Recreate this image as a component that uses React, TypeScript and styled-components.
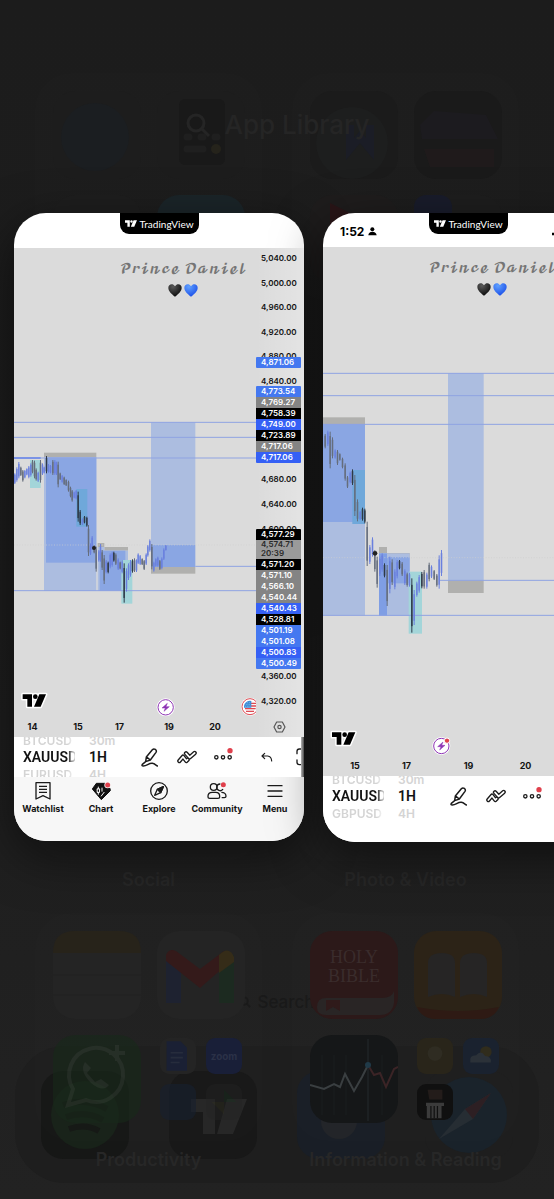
import React from 'react';
import styled, { createGlobalStyle, css } from 'styled-components';

const GlobalStyle = createGlobalStyle`
  * { box-sizing: border-box; }
  body { margin: 0; background: #1e1e1e; font-family: Inter, "Liberation Sans", sans-serif; }
  button { border: 0; margin: 0; padding: 0; background: none; color: inherit; font: inherit; }
  svg { display: block; }
`;

const Page = styled.div`
  position: relative;
  min-height: 100vh;
  padding-top: 213px;
  overflow: hidden;
  background: linear-gradient(#1c1c1c, #1d1d1d 50%, #222222);
`;

/* ---------- dimmed home screen ---------- */

const Backdrop = styled.div`
  position: absolute;
  inset: 0;
  overflow: hidden;
`;

const FolderGrid = styled.div`
  position: relative;
  display: grid;
  grid-template-columns: 1fr 1fr;
  column-gap: 30px;
  padding: 73px 35px 0;
`;

const FolderCell = styled.div`
  height: 280px;
  text-align: center;
`;

const FolderBox = styled.div`
  display: grid;
  grid-template-columns: 88px 88px;
  grid-auto-rows: 88px;
  gap: 16px;
  justify-content: center;
  align-content: center;
  height: 228px;
  border-radius: 36px;
  background: rgba(255, 255, 255, 0.008);
`;

const FolderLabel = styled.div`
  font-size: 18px;
  line-height: 24px;
  padding-top: 7px;
  font-weight: 600;
  color: #272727;
`;

const Quad = styled.div`
  display: grid;
  grid-template-columns: 36px 36px;
  grid-auto-rows: 36px;
  gap: 10px;
  justify-content: center;
  align-content: center;
`;

const Dock = styled.div`
  position: absolute;
  left: 15px;
  right: 15px;
  bottom: 16px;
  height: 137px;
  display: flex;
  justify-content: space-between;
  align-items: center;
  padding: 0 26px;
  border-radius: 50px;
  background: #1e1e1e;
`;

const LibraryTitle = styled.div`
  position: absolute;
  top: 109px;
  left: 0;
  right: 0;
  display: flex;
  justify-content: center;
  align-items: center;
  gap: 14px;
  font-size: 26px;
  line-height: 32px;
  font-weight: 500;
  color: #252525;
`;

const SearchHint = styled.div`
  position: absolute;
  bottom: 187px;
  left: 0;
  right: 0;
  display: flex;
  justify-content: center;
  align-items: center;
  gap: 6px;
  font-size: 17px;
  line-height: 20px;
  font-weight: 500;
  color: #191919;
`;

/* ---------- app cards ---------- */

const Switcher = styled.main`
  position: relative;
  display: flex;
  align-items: flex-start;
  gap: 19px;
  padding: 0 0 60px 14px;
`;

const Card = styled.article`
  flex: none;
  width: calc(50vw + 13px);
  min-width: 290px;
  overflow: hidden;
  border-radius: 32px;
  background: #ffffff;
  color: #131313;
  box-shadow: 0 14px 50px rgba(0, 0, 0, 0.55);
`;

const StatusBar = styled.header<{ $tall?: boolean }>`
  display: grid;
  grid-template-columns: 1fr auto 1fr;
  height: ${(p) => (p.$tall ? 35 : 34)}px;
`;

const Clock = styled.div`
  display: flex;
  align-items: center;
  gap: 4px;
  padding: 3px 0 0 17px;
  font-size: 12px;
  line-height: 16px;
  font-weight: 700;
  color: #000;
`;

const Signal = styled.div`
  display: flex;
  align-items: center;
  padding: 3px 0 0 43px;
`;

const Brand = styled.div`
  display: flex;
  align-items: center;
  justify-content: center;
  gap: 3px;
  width: 79px;
  height: 21px;
  border-radius: 0 0 9px 9px;
  background: #000;
  color: #fff;
  font-family: Lato, sans-serif;
  font-size: 10px;
  line-height: 12px;
  font-weight: 400;
`;

const ChartArea = styled.section`
  position: relative;
  display: flex;
  background: #dbdbdb;
`;

const PlotColumn = styled.div`
  flex: 1;
  min-width: 0;
`;

const PlotSvg = styled.svg<{ $h: number }>`
  width: 100%;
  height: ${(p) => p.$h}px;
`;

const TimeAxis = styled.div<{ $cols: string }>`
  display: grid;
  grid-template-columns: ${(p) => p.$cols};
  height: 20px;
  text-align: center;
  font-size: 9px;
  line-height: 20px;
  font-weight: 700;
`;

const Watermark = styled.div`
  position: absolute;
  top: 10px;
  left: 106px;
  display: flex;
  flex-direction: column;
  align-items: center;
  gap: 4px;
  font-family: "DejaVu Math TeX Gyre", "DejaVu Serif", serif;
  font-size: 12px;
  line-height: 22px;
  color: #757575;
  white-space: nowrap;
`;

const Hearts = styled.div`
  display: flex;
  gap: 2px;
`;

const PriceColumn = styled.div`
  position: relative;
  flex: none;
  width: 48px;
  font-size: 8px;
  line-height: 11px;
  font-weight: 600;
  background: linear-gradient(90deg, rgba(255, 255, 255, 0), rgba(255, 255, 255, 0.25));
`;

const Ticks = styled.div`
  display: flex;
  flex-direction: column;
  justify-content: space-between;
  height: 459px;
  padding: 5px 0 0 5px;
`;

const Tick = styled.div`
  height: 11px;
`;

const LevelStack = styled.div<{ $top: number }>`
  position: absolute;
  top: ${(p) => p.$top}px;
  left: 0;
  width: 45px;
  overflow: hidden;
  border-radius: 1px;
`;

type Tone = 'blue' | 'deep' | 'gray' | 'black' | 'now';
const tones: Record<Tone, string> = {
  blue: '#4478f0',
  deep: '#3560f5',
  gray: '#848484',
  black: '#000000',
  now: '#9a9a9a',
};

const Level = styled.div<{ $tone: Tone }>`
  padding-left: 5px;
  height: 11px;
  background: ${(p) => tones[p.$tone]};
  color: #fff;
  ${(p) =>
    p.$tone === 'now' &&
    css`
      height: 19px;
      line-height: 9px;
      color: #2a2a2a;
    `}
`;

const AxisButton = styled.button`
  position: absolute;
  right: 18px;
  bottom: 4px;
`;

const Toolbar = styled.div<{ $h: number }>`
  position: relative;
  display: flex;
  height: ${(p) => p.$h}px;
  padding-left: 9px;
  overflow: hidden;
  background: #fff;
`;

const Wheel = styled.div<{ $w: number; $fade?: boolean }>`
  display: flex;
  flex-direction: column;
  align-items: flex-start;
  flex: none;
  width: ${(p) => p.$w}px;
  height: 51px;
  margin: -5px 14px 0 0;
  overflow: hidden;
  white-space: nowrap;
  ${(p) =>
    p.$fade &&
    css`
      mask-image: linear-gradient(90deg, #000 86%, rgba(0, 0, 0, 0.4) 94%, rgba(0, 0, 0, 0.2));
    `}
`;

const WheelOption = styled.button<{ $on?: boolean }>`
  height: 17px;
  line-height: 17px;
  font-size: ${(p) => (p.$on ? 14 : 12)}px;
  font-weight: 600;
  color: ${(p) => (p.$on ? '#131313' : '#d4d4d4')};
  font-family: ${(p) => (p.$on ? 'Roboto, sans-serif' : 'inherit')};
`;

const Tools = styled.div`
  display: flex;
  align-items: center;
  height: 40px;
`;

const Tool = styled.button<{ $w?: number }>`
  display: flex;
  justify-content: center;
  flex: none;
  width: ${(p) => p.$w ?? 37}px;
`;

const EdgeShade = styled.div`
  position: absolute;
  top: 0;
  right: 0;
  width: 3px;
  height: 100%;
  background: linear-gradient(90deg, #b5b5b5, #4a4a4a);
`;

const Nav = styled.nav`
  display: grid;
  grid-template-columns: repeat(5, 1fr);
  height: 64px;
  padding-top: 4px;
  background: #f7f7f7;
`;

const NavLink = styled.a`
  display: flex;
  flex-direction: column;
  align-items: center;
  gap: 1px;
  color: #131313;
  text-decoration: none;
  font-size: 9px;
  line-height: 14px;
  font-weight: 700;
`;

/* ---------- drawings ---------- */

const tvPath = 'M0 0H28V37H14V14H0Z M50 0H70L54 37H34Z';

const TvMark = ({ x = 0, y = 0, fill = '#000', outline }: { x?: number; y?: number; fill?: string; outline?: boolean }) => (
  <g transform={`translate(${x} ${y})`}>
    {outline && (
      <g fill="#fff" stroke="#fff" strokeWidth="9" strokeLinejoin="round">
        <path d={tvPath} />
        <circle cx="38" cy="7" r="7" />
      </g>
    )}
    <path d={tvPath} fill={fill} />
    <circle cx="38" cy="7" r="7" fill={fill} />
  </g>
);

const Bolt = ({ cx, cy, dot }: { cx: number; cy: number; dot?: boolean }) => (
  <g transform={`translate(${cx} ${cy})`}>
    <circle r="27" fill="#fff" />
    <circle r="23" fill="#fff" stroke="#8e35b5" strokeWidth="3" />
    <path d="M5-12L-11 2H-1L-5 12L11-2H1Z" fill="#8e35b5" stroke="#8e35b5" strokeWidth="1.5" strokeLinejoin="round" />
    {dot && <circle cx="17" cy="-16" r="8" fill="#e0404c" stroke="#fff" strokeWidth="3" />}
  </g>
);

const Flag = ({ cx, cy }: { cx: number; cy: number }) => (
  <g transform={`translate(${cx} ${cy})`}>
    <circle r="27" fill="#fff" />
    <circle r="24" fill="#fff" stroke="#dd4a52" strokeWidth="3" />
    <circle r="18" fill="#f4f4f8" />
    <path d="M0-10H18M0-2H18M-15 6H17M-12 14H12" stroke="#dd4a52" strokeWidth="4" />
    <path d="M-18 3A18 18 0 0 1 4-17V3Z" fill="#3f8fd8" />
    <path d="M-12-6H2M-8-12H2M-14-1H2" stroke="#cfe4f6" strokeWidth="1.5" strokeDasharray="2 3" />
  </g>
);

const Heart = ({ id, from, to }: { id: string; from: string; to: string }) => (
  <svg width="14" height="13" viewBox="0 0 42 39" aria-hidden="true">
    <defs>
      <radialGradient id={id} cx="35%" cy="20%" r="80%">
        <stop offset="0" stopColor={from} />
        <stop offset="1" stopColor={to} />
      </radialGradient>
    </defs>
    <path d="M21 38C10 29 1 21 1 11C1 0 15-3 21 7C27-3 41 0 41 11C41 21 32 29 21 38Z" fill={`url(#${id})`} />
  </svg>
);

type Candle = [number, number, number, 'b' | 'd' | 'k'];
const ink = { b: '#6a80de', d: '#656d7c', k: '#2e3a48' };

const Candles = ({ data }: { data: Candle[] }) => (
  <g>
    {data.map(([x, top, bottom, tone]) => {
      const inset = (bottom - top) * 0.12;
      return (
        <g key={x} fill={ink[tone]}>
          <rect x={x - 1} y={top} width="3" height={bottom - top} />
          <rect x={x - 2} y={top + inset} width="5" height={bottom - top - inset * 2} opacity="0.85" />
        </g>
      );
    })}
  </g>
);

type Box = [number, number, number, number, string];
const Boxes = ({ data }: { data: Box[] }) => (
  <g>
    {data.map(([x1, y1, x2, y2, fill], i) => (
      <rect key={i} x={x1} y={y1} width={x2 - x1} height={y2 - y1} fill={fill} />
    ))}
  </g>
);

const STRONG = '#8aa6e3';
const SOFT = '#acbde0';
const GRAY = '#b0b0ae';
const CYAN = '#a3d5d9';
const TEAL = '#6fa8da';

/* Plot units: three to a pixel. */
const boxesA: Box[] = [
  [132, 128, 289, 142, GRAY],
  [132, 142, 289, 543, SOFT],
  [138, 142, 289, 458, STRONG],
  [90, 150, 122, 234, CYAN],
  [229, 237, 262, 350, TEAL],
  [453, 37, 586, 405, SOFT],
  [453, 405, 586, 471, STRONG],
  [453, 471, 586, 491, GRAY],
  [293, 399, 313, 411, GRAY],
  [313, 411, 384, 422, GRAY],
  [293, 411, 313, 543, SOFT],
  [299, 422, 384, 543, SOFT],
  [299, 422, 376, 543, STRONG],
  [364, 450, 397, 581, CYAN],
];

const candlesA: Candle[] = [
  [44, 190, 222, 'b'], [50, 172, 215, 'b'], [56, 156, 205, 'b'], [62, 170, 198, 'd'], [68, 180, 215, 'd'],
  [74, 180, 205, 'b'], [80, 175, 196, 'b'], [86, 168, 205, 'b'], [92, 160, 200, 'b'], [97, 150, 190, 'd'],
  [103, 152, 205, 'd'], [108, 175, 212, 'd'], [114, 185, 216, 'b'], [121, 150, 218, 'd'], [127, 160, 195, 'b'],
  [132, 170, 190, 'b'], [139, 138, 190, 'k'], [145, 162, 188, 'b'], [151, 165, 190, 'b'], [158, 150, 195, 'd'],
  [164, 150, 195, 'b'], [169, 155, 195, 'b'], [174, 155, 232, 'd'], [180, 188, 210, 'd'], [186, 195, 218, 'b'],
  [192, 200, 225, 'd'], [198, 208, 228, 'd'], [205, 212, 245, 'd'], [211, 230, 262, 'd'], [216, 240, 275, 'd'],
  [222, 245, 265, 'b'], [228, 240, 268, 'b'], [234, 245, 335, 'k'], [240, 300, 345, 'k'], [247, 325, 345, 'b'],
  [253, 318, 340, 'k'], [260, 320, 350, 'k'], [265, 345, 438, 'd'], [271, 400, 435, 'b'], [276, 378, 420, 'b'],
  [282, 405, 430, 'd'], [288, 410, 485, 'd'], [296, 420, 455, 'b'], [301, 402, 455, 'b'], [306, 420, 480, 'd'],
  [312, 435, 522, 'd'], [318, 450, 490, 'b'], [324, 455, 490, 'k'], [330, 430, 475, 'b'], [336, 425, 470, 'b'],
  [341, 425, 455, 'k'], [347, 430, 465, 'd'], [354, 445, 480, 'b'], [360, 455, 478, 'd'], [366, 450, 490, 'b'],
  [372, 460, 578, 'k'], [379, 475, 545, 'b'], [385, 460, 510, 'b'], [391, 450, 500, 'b'], [397, 448, 488, 'k'],
  [403, 445, 486, 'd'], [409, 448, 486, 'b'], [414, 430, 462, 'b'], [420, 435, 465, 'b'], [426, 445, 465, 'd'],
  [432, 450, 480, 'd'], [438, 430, 465, 'b'], [443, 405, 440, 'b'], [449, 388, 425, 'b'], [455, 402, 478, 'd'],
  [461, 455, 485, 'b'], [467, 445, 470, 'b'], [473, 440, 470, 'b'], [479, 450, 480, 'd'], [485, 442, 478, 'b'],
  [491, 415, 450, 'b'], [497, 405, 422, 'b'],
];

const boxesB: Box[] = [
  [39, 22, 165, 42, GRAY],
  [39, 42, 165, 336, STRONG],
  [39, 336, 165, 616, SOFT],
  [127, 180, 165, 342, TEAL],
  [414, -110, 521, 511, SOFT],
  [414, 511, 521, 549, GRAY],
  [207, 411, 231, 430, GRAY],
  [231, 429, 299, 441, GRAY],
  [207, 430, 299, 618, SOFT],
  [207, 430, 231, 618, '#7f9ee4'],
  [231, 441, 299, 520, STRONG],
  [296, 485, 336, 671, CYAN],
];

const candlesB: Candle[] = [
  [45, 72, 115, 'd'], [53, 62, 108, 'b'], [60, 65, 175, 'd'], [67, 82, 145, 'd'], [75, 118, 146, 'b'],
  [82, 120, 165, 'd'], [89, 130, 152, 'd'], [97, 143, 175, 'd'], [105, 160, 212, 'd'], [112, 198, 234, 'd'],
  [120, 185, 220, 'b'], [127, 178, 225, 'k'], [134, 195, 318, 'd'], [142, 268, 334, 'd'], [150, 303, 330, 'b'],
  [157, 293, 332, 'k'], [164, 296, 340, 'k'], [171, 335, 468, 'd'], [179, 405, 462, 'b'], [187, 382, 440, 'b'],
  [194, 420, 485, 'd'], [201, 440, 533, 'd'], [209, 440, 498, 'b'], [216, 430, 485, 'b'], [223, 460, 502, 'k'],
  [231, 465, 588, 'd'], [239, 440, 550, 'b'], [246, 448, 525, 'd'], [254, 478, 538, 'b'], [261, 450, 505, 'b'],
  [268, 450, 478, 'k'], [276, 456, 498, 'd'], [284, 478, 525, 'b'], [291, 488, 530, 'd'], [298, 488, 530, 'b'],
  [305, 505, 668, 'k'], [312, 540, 645, 'b'], [320, 515, 560, 'b'], [327, 495, 548, 'b'], [335, 486, 535, 'k'],
  [342, 480, 536, 'd'], [350, 488, 536, 'b'], [357, 458, 514, 'd'], [364, 466, 504, 'b'], [372, 480, 510, 'd'],
  [380, 492, 530, 'd'], [387, 436, 536, 'b'], [394, 420, 498, 'b'],
];

const PenIcon = () => (
  <svg width="17" height="19" viewBox="0 0 51 57" fill="none" stroke="#1b1b1b" strokeWidth="4.5" strokeLinejoin="round" strokeLinecap="round">
    <path d="M16 27L34 5Q38 1 43 4Q48 8 45 13L28 36L14 41Z M17 27L28 36 M14 41L4 49Q1 54 7 54C18 54 23 45 34 46C41 47 44 51 49 54" />
  </svg>
);

const PatternIcon = () => (
  <svg width="20" height="14" viewBox="0 0 60 42" strokeLinejoin="round" strokeLinecap="round" fill="none">
    <path d="M7 33L18 20L28 33L32 29" stroke="#1b1b1b" strokeWidth="13" />
    <path d="M7 33L18 20L28 33L32 29" stroke="#fff" strokeWidth="5" />
    <path d="M27 10L38 22L53 9" stroke="#1b1b1b" strokeWidth="13" />
    <path d="M27 10L38 22L53 9" stroke="#fff" strokeWidth="5" />
  </svg>
);

const MoreIcon = () => (
  <svg width="19" height="20" viewBox="0 0 57 60" fill="none" stroke="#1b1b1b" strokeWidth="4">
    <circle cx="7" cy="31" r="5" />
    <circle cx="27" cy="31" r="5" />
    <circle cx="47" cy="31" r="5" />
    <circle cx="48" cy="11" r="8" fill="#e0404c" stroke="none" />
  </svg>
);

const UndoIcon = () => (
  <svg width="12" height="11" viewBox="0 0 36 33" fill="none" stroke="#1b1b1b" strokeWidth="3.5" strokeLinejoin="round" strokeLinecap="round">
    <path d="M11 4L3 12L11 20M4 12H20Q31 13 32 27" />
  </svg>
);

const FrameIcon = () => (
  <svg width="17" height="18" viewBox="0 0 51 54" fill="none" stroke="#1b1b1b" strokeWidth="4" strokeLinecap="round">
    <path d="M14 3H10Q3 3 3 10V17M3 36V43Q3 50 10 50H14M36 3H41Q48 3 48 10V17M48 36V43Q48 50 41 50H36" />
  </svg>
);

const HexIcon = () => (
  <svg width="13" height="12" viewBox="0 0 39 36" fill="none" stroke="#555" strokeWidth="3.5" strokeLinejoin="round">
    <path d="M11 3H28L36 18L28 33H11L3 18Z" />
    <circle cx="19.500" cy="18" r="5" />
  </svg>
);

const navBase = { width: 20, height: 20, viewBox: '0 0 60 60', fill: 'none', stroke: '#1b1b1b', strokeWidth: 4, strokeLinejoin: 'round' as const };

const WatchIcon = () => (
  <svg {...navBase}>
    <path d="M9 5H51V54L30 44L9 54Z M18 16H42M18 25H42M18 34H42" />
  </svg>
);
const ChartIcon = () => (
  <svg {...navBase} stroke="none">
    <path d="M4 24L16 7H42Q46 20 57 22L58 29L31 56Z" fill="#111" stroke="#111" strokeWidth="3" />
    <path d="M22 17V41M33 20V32" stroke="#f7f7f7" strokeWidth="3" />
    <rect x="17" y="22" width="10" height="14" rx="3" fill="#f7f7f7" />
    <rect x="20" y="25" width="4" height="8" rx="2" fill="#111" />
    <path d="M30 46L40 33" stroke="#f7f7f7" strokeWidth="3" />
    <circle cx="50" cy="12" r="10" fill="#f7f7f7" />
    <circle cx="50" cy="12" r="7.500" fill="#e0404c" />
  </svg>
);
const ExploreIcon = () => (
  <svg {...navBase}>
    <circle cx="30" cy="30" r="25" />
    <path d="M43 17L35 35L17 43L25 25Z" />
    <path d="M43 17L35 35L25 25Z" fill="#1b1b1b" />
  </svg>
);
const CommunityIcon = () => (
  <svg {...navBase}>
    <circle cx="20" cy="18" r="10" />
    <path d="M3 48Q2 34 16 34H26Q39 34 38 48Q38 52 33 52H8Q3 52 3 48Z" />
    <path d="M40 9A10 10 0 1 0 48 24M43 34Q57 34 57 46Q57 50 52 50H44" />
    <circle cx="49" cy="11" r="7.500" fill="#e0404c" stroke="none" />
  </svg>
);
const MenuIcon = () => (
  <svg {...navBase} strokeLinecap="round">
    <path d="M9 14H51M9 30H51M9 46H51" />
  </svg>
);

const Person = () => (
  <svg width="9" height="9" viewBox="0 0 27 27" aria-hidden="true">
    <circle cx="13" cy="7" r="6" />
    <path d="M1 25Q2 14 13 14T26 25Z" />
  </svg>
);

/* ---------- home screen tiles ---------- */

const Tile = ({ fill = '#272727', size = 88, fade = 1, children }: { fill?: string; size?: number; fade?: number; children?: React.ReactNode }) => (
  <svg width={size} height={size} viewBox="0 0 88 88" opacity={fade} aria-hidden="true">
    <rect width="88" height="88" rx="22" fill={fill} />
    {children}
  </svg>
);

const MailTile = () => (
  <Tile fill="#242424">
    <path d="M9 72V24L24 36V72Z" fill="#1e2230" />
    <path d="M62 72V36L77 24V72Z" fill="#1c2a20" />
    <path d="M9 24Q12 17 19 20L43 38L67 20V36L43 57L9 30Z" fill="#341a1a" />
    <path d="M62 24Q72 14 77 26V31L62 42Z" fill="#352c18" />
  </Tile>
);

const BibleTile = () => (
  <Tile fill="#2c1919">
    <path d="M7 76Q7 67 16 67H72Q82 67 84 60V72Q82 84 70 84H16Q7 84 7 76Z" fill="#292525" />
    <path d="M16 69H30V80L23 76L16 80Z" fill="#2f1a1a" />
    <g fill="#3a2c2c" fontFamily="Liberation Serif, serif" fontSize="18" textAnchor="middle">
      <text x="44" y="32">HOLY</text>
      <text x="44" y="51">BIBLE</text>
    </g>
  </Tile>
);

const BooksTile = () => (
  <Tile fill="#2c2317">
    <path d="M14 66V32Q14 22 28 22Q41 22 41 32V66Q28 60 14 66ZM46 66V32Q46 22 60 22Q73 22 73 32V66Q60 60 46 66Z" fill="#262525" />
    <path d="M3 76Q44 84 85 76Q80 88 66 88H22Q8 88 3 76Z" fill="#2e1a14" />
  </Tile>
);

const WhatsAppTile = () => (
  <Tile fill="#18291a" fade={0.6}>
    <path d="M15 70L20 54A27 27 0 1 1 33 65Z" fill="none" stroke="#2c3a2d" strokeWidth="4" />
    <path d="M32 27Q26 36 38 48Q50 58 56 50L48 44L42 47L34 38L38 33Z" fill="#2c3a2d" />
    <path d="M64 10V26M56 18H72" stroke="#2c3a2d" strokeWidth="4" />
  </Tile>
);

const StocksTile = () => (
  <Tile fill="#151718">
    <path d="M12 20V80M24 20V80M36 20V80M72 20V80" stroke="#1b1e1f" />
    <path d="M58 4V86" stroke="#242a2c" />
    <path d="M0 50L14 54L24 49L30 52L35 39L44 56L52 42L58 30" fill="none" stroke="#3a3f41" strokeWidth="2" />
    <path d="M58 30L64 40L70 38L76 52L84 34L88 32" fill="none" stroke="#3b2426" strokeWidth="2" />
    <circle cx="58" cy="30" r="3" fill="#203a48" />
  </Tile>
);

const OfficeApps = () => (
  <Quad>
    <Tile size={36} fill="#242424"><path d="M16 8H50L66 24V80H16Z" fill="#1a2034" /><path d="M26 36H56M26 48H56M26 60H48" stroke="#262c3c" strokeWidth="4" /></Tile>
    <Tile size={36} fill="#191f38"><text x="44" y="54" fill="#2b3147" fontSize="24" fontWeight="700" textAnchor="middle">zoom</text></Tile>
    <Tile size={36} fill="#17202f" fade={0.6} />
    <Tile size={36} fill="#242424" fade={0.4}><path d="M44 14V44H74Z" fill="#18301f" /><path d="M44 74V44H14Z" fill="#30301f" /></Tile>
  </Quad>
);

const ReaderApps = () => (
  <Quad>
    <Tile size={36} fill="#29251a"><circle cx="44" cy="38" r="18" fill="#2f2c22" /></Tile>
    <Tile size={36} fill="#1a222f"><circle cx="56" cy="34" r="14" fill="#302c1c" /><path d="M18 60Q14 42 32 42Q44 28 54 44Q70 44 68 60Z" fill="#2b3138" /></Tile>
    <Tile size={36} fill="#101010"><path d="M22 46H66V54H60V84H24V54H22Z" fill="#3b3b3b" /><path d="M34 54V84M42 54V84M50 54V84" stroke="#101010" strokeWidth="3" /><path d="M26 14H62V38H30Z" fill="#231c1a" /></Tile>
  </Quad>
);

const HomeScreen = () => (
  <Backdrop aria-hidden="true">
    <SearchHint>
      <svg width="12" height="12" viewBox="0 0 26 26" fill="none" stroke="#191919" strokeWidth="4"><circle cx="11" cy="11" r="8" /><path d="M17 17L24 24" /></svg>
      Search
    </SearchHint>
    <Dock>
      <Tile fill="#161716"><circle cx="44" cy="44" r="34" fill="#182219" /><path d="M22 34Q44 26 66 38M25 46Q44 39 62 49M28 58Q44 52 58 60" fill="none" stroke="#151815" strokeWidth="6" /></Tile>
      <Tile fill="#181818"><g transform="translate(22 28)"><path d="M0 0H24V35H12V13H0Z M36 0H56L42 35H26Z" fill="#262626" /></g></Tile>
      <Tile fill="#191e26"><circle cx="42" cy="50" r="18" fill="#222428" /></Tile>
      <Tile fill="#1e1e1e"><circle cx="44" cy="44" r="38" fill="#19222a" /><path d="M14 68L40 38L66 22L48 48Z" fill="#252c32" /><path d="M40 38L66 22L48 48Z" fill="#2c1e22" /></Tile>
    </Dock>
    <FolderGrid>
      <FolderCell>
        <FolderBox>
          <Tile fill="#1d1d1d"><circle cx="42" cy="46" r="34" fill="#1b1e21" /></Tile>
          <Tile fill="#1d1d1d">
            <rect x="22" y="8" width="46" height="66" rx="6" fill="#191919" />
            <path d="M30 46H32M44 46H46M58 46H60M30 58H46" stroke="#1f1f1f" strokeWidth="7" strokeLinecap="round" />
            <circle cx="59" cy="58" r="5" fill="#25231b" />
          </Tile>
          <Tile fill="#1e1e1e" />
          <Tile fill="#1b2529" />
        </FolderBox>
      </FolderCell>
      <FolderCell>
        <FolderBox>
          <Tile fill="#1b1b1b"><circle cx="42" cy="52" r="36" fill="#1d1e1e" /><path d="M40 34V58L50 46L60 58V34" fill="none" stroke="#1b1d26" strokeWidth="8" /></Tile>
          <Tile fill="#1a1a1a"><path d="M6 34L20 20L72 24L84 48H8Z" fill="#1c1b1f" /><path d="M10 58H80V76H16Z" fill="#1f1a1b" /></Tile>
          <Tile fill="#1f1d1d"><path d="M20 8L44 20L20 34Z" fill="#2a1618" /></Tile>
          <Tile fill="#1e1e1e"><rect width="38" height="40" rx="12" fill="#191c2b" /></Tile>
        </FolderBox>
      </FolderCell>
      <FolderCell />
      <FolderCell />
      <FolderCell><FolderBox /><FolderLabel>Social</FolderLabel></FolderCell>
      <FolderCell><FolderBox /><FolderLabel>Photo &amp; Video</FolderLabel></FolderCell>
      <FolderCell>
        <FolderBox>
          <Tile fill="#242424"><path d="M0 22Q0 0 22 0H66Q88 0 88 22Z" fill="#27231a" /><path d="M0 44H88M0 64H88" stroke="#212121" /></Tile>
          <MailTile />
          <WhatsAppTile />
          <OfficeApps />
        </FolderBox>
        <FolderLabel>Productivity</FolderLabel>
      </FolderCell>
      <FolderCell>
        <FolderBox>
          <BibleTile />
          <BooksTile />
          <StocksTile />
          <ReaderApps />
        </FolderBox>
        <FolderLabel>Information &amp; Reading</FolderLabel>
      </FolderCell>
    </FolderGrid>
    <LibraryTitle>
      <svg width="26" height="26" viewBox="0 0 26 26" fill="none" stroke="#252525" strokeWidth="3"><circle cx="11" cy="11" r="8" /><path d="M17 17L24 24" /></svg>
      App Library
    </LibraryTitle>
  </Backdrop>
);

/* ---------- card parts ---------- */

const BrandTab = () => (
  <Brand>
    <svg width="12" height="7" viewBox="0 0 70 37" aria-hidden="true"><TvMark fill="#fff" /></svg>
    TradingView
  </Brand>
);

const OwnerMark = ({ id }: { id: string }) => (
  <Watermark>
    <span>𝓟𝓻𝓲𝓷𝓬𝓮 𝓓𝓪𝓷𝓲𝓮𝓵</span>
    <Hearts>
      <Heart id={`${id}-dark`} from="#5a5a5a" to="#0c0c0c" />
      <Heart id={`${id}-blue`} from="#5fa0ff" to="#1c50e8" />
    </Hearts>
  </Watermark>
);

const SymbolBar = ({ h, symbols, full }: { h: number; symbols: string[]; full?: boolean }) => (
  <Toolbar $h={h}>
    <Wheel $w={52} $fade>
      {symbols.map((s, i) => (
        <WheelOption key={s} $on={i === 1}>{s}</WheelOption>
      ))}
    </Wheel>
    <Wheel $w={28}>
      {['30m', '1H', '4H'].map((s, i) => (
        <WheelOption key={s} $on={i === 1}>{s}</WheelOption>
      ))}
    </Wheel>
    <Tools>
      <Tool aria-label="Draw"><PenIcon /></Tool>
      <Tool aria-label="Indicators"><PatternIcon /></Tool>
      <Tool aria-label="More"><MoreIcon /></Tool>
      {full && <Tool $w={50} aria-label="Undo"><UndoIcon /></Tool>}
      {full && <Tool $w={24} aria-label="Full screen"><FrameIcon /></Tool>}
    </Tools>
    {full && <EdgeShade />}
  </Toolbar>
);

const formatPrice = (value: number) => `${Math.floor(value / 1000)},${String(value % 1000).padStart(3, '0')}.00`;

/* Round prices that the level tags cover completely carry no label. */
const isCovered = (value: number) => (value > 4680 && value < 4840) || (value > 4360 && value < 4600);

const ticks = Array.from({ length: 19 }, (_, i) => 5040 - i * 40);

const levels: { top: number; rows: [string, Tone][] }[] = [
  { top: 109, rows: [['4,871.06', 'blue']] },
  {
    top: 138,
    rows: [
      ['4,773.54', 'blue'], ['4,769.27', 'gray'], ['4,758.39', 'black'], ['4,749.00', 'deep'],
      ['4,723.89', 'black'], ['4,717.06', 'gray'], ['4,717.06', 'deep'],
    ],
  },
  {
    top: 281,
    rows: [
      ['4,577.29', 'black'], ['4,574.71\n20:39', 'now'], ['4,571.20', 'black'], ['4,571.10', 'gray'],
      ['4,566.10', 'gray'], ['4,540.44', 'gray'], ['4,540.43', 'deep'], ['4,528.81', 'black'],
      ['4,501.19', 'blue'], ['4,501.08', 'blue'], ['4,500.83', 'deep'], ['4,500.49', 'blue'],
    ],
  },
];

const navItems = [
  { label: 'Watchlist', icon: <WatchIcon /> },
  { label: 'Chart', icon: <ChartIcon /> },
  { label: 'Explore', icon: <ExploreIcon /> },
  { label: 'Community', icon: <CommunityIcon /> },
  { label: 'Menu', icon: <MenuIcon /> },
];

const lineStyle = { stroke: '#8fa3e2', strokeWidth: 3 };

export default function App() {
  return (
    <>
      <GlobalStyle />
      <Page>
        <HomeScreen />
        <Switcher>
          <Card>
            <StatusBar $tall><span /><BrandTab /><span /></StatusBar>
            <ChartArea>
              <PlotColumn>
                <PlotSvg $h={469} viewBox="42 -486 726 1407" preserveAspectRatio="xMidYMid slice">
                  <Boxes data={boxesA} />
                  <path d="M42 37H768M42 82H768M42 144H768M586 469H768M42 542H768" {...lineStyle} />
                  <path d="M42 144H122" stroke="#7b93e6" strokeWidth="6" />
                  <path d="M42 405H768" stroke="#cfcfcf" strokeWidth="2" strokeDasharray="3 5" />
                  <Candles data={candlesA} />
                  <circle cx="282" cy="414" r="6" fill="#222" />
                  <TvMark x={68} y={853} outline />
                  <Bolt cx={497} cy={892} />
                  <Flag cx={750} cy={890} />
                </PlotSvg>
                <TimeAxis $cols="37fr 54fr 29fr 70fr 22fr 30fr">
                  <span>14</span><span>15</span><span>17</span><span>19</span><span>20</span>
                </TimeAxis>
              </PlotColumn>
              <PriceColumn>
                <Ticks>{ticks.map((t) => <Tick key={t}>{isCovered(t) ? null : formatPrice(t)}</Tick>)}</Ticks>
                {levels.map((group) => (
                  <LevelStack key={group.top} $top={group.top}>
                    {group.rows.map(([text, tone], i) => (
                      <Level key={i} $tone={tone}>
                        {text.split('\n').map((line) => <div key={line}>{line}</div>)}
                      </Level>
                    ))}
                  </LevelStack>
                ))}
                <AxisButton aria-label="Scale settings"><HexIcon /></AxisButton>
              </PriceColumn>
              <OwnerMark id="a" />
            </ChartArea>
            <SymbolBar h={40} symbols={['BTCUSD', 'XAUUSD', 'EURUSD']} full />
            <Nav>
              {navItems.map((item) => (
                <NavLink key={item.label} href="#">{item.icon}{item.label}</NavLink>
              ))}
            </Nav>
          </Card>

          <Card>
            <StatusBar>
              <Clock>1:52 <Person /></Clock>
              <BrandTab />
              <Signal>
                <svg width="12" height="9" viewBox="0 0 36 27" aria-hidden="true"><path d="M3 17H9V25H3ZM12 12H18V25H12ZM21 7H27V25H21ZM30 2H36V25H30Z" /></svg>
              </Signal>
            </StatusBar>
            <ChartArea>
              <PlotColumn>
                <PlotSvg $h={509} viewBox="39 -489 870 1527" preserveAspectRatio="xMidYMid slice">
                  <Boxes data={boxesB} />
                  <path d="M39-110H909M39-43H909M39 43H909M390 511H909M39 616H909" {...lineStyle} />
                  <path d="M39 443H909" stroke="#cfcfcf" strokeWidth="2" strokeDasharray="3 5" />
                  <Candles data={candlesB} />
                  <circle cx="195" cy="430" r="7" fill="#222" />
                  <TvMark x={66} y={967} outline />
                  <Bolt cx={394} cy={1008} dot />
                </PlotSvg>
                <TimeAxis $cols="64fr 39fr 85fr 29fr 73fr">
                  <span>15</span><span>17</span><span>19</span><span>20</span>
                </TimeAxis>
              </PlotColumn>
              <OwnerMark id="b" />
            </ChartArea>
            <SymbolBar h={66} symbols={['BTCUSD', 'XAUUSD', 'GBPUSD']} />
          </Card>
        </Switcher>
      </Page>
    </>
  );
}
